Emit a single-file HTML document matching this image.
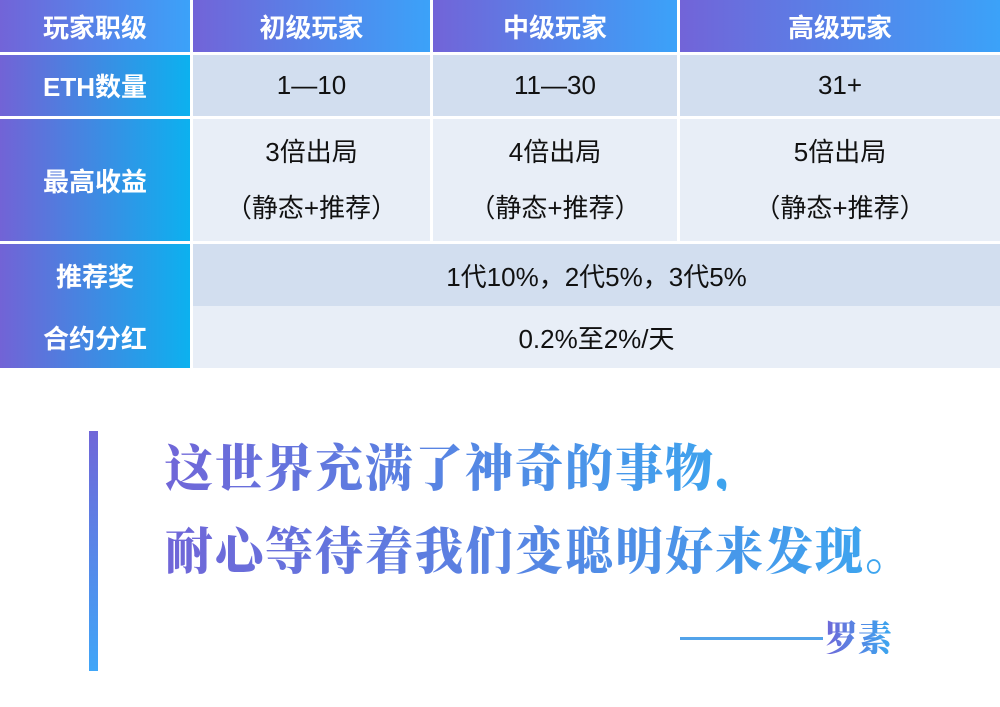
<!DOCTYPE html>
<html><head><meta charset="utf-8"><style>
body{margin:0;width:1000px;height:707px;background:#fff;position:relative;overflow:hidden;font-family:"Liberation Sans","Noto Sans CJK SC",sans-serif}
.c{position:absolute;display:flex;align-items:center;justify-content:center;text-align:center;font-size:26px;color:#111}
.h{background:linear-gradient(90deg,#7264d8,#3ba2f9);color:#fff;font-weight:bold}
.l{background:linear-gradient(90deg,#7263d6,#0cb1ef);color:#fff;font-weight:bold}
.a{background:#d2deef}.b{background:#e8eef7}
.q{position:absolute;left:165px;font-family:"Noto Serif CJK SC",serif;font-weight:900;font-size:48px;letter-spacing:2px;line-height:1;background:linear-gradient(90deg,#7066d8,#3aa8f0);-webkit-background-clip:text;background-clip:text;color:transparent;white-space:nowrap;transform:scaleY(1.06);transform-origin:top left}
</style></head><body>
<div class="c h" style="left:0;top:0;width:190px;height:52px">玩家职级</div>
<div class="c h" style="left:193px;top:0;width:237px;height:52px">初级玩家</div>
<div class="c h" style="left:433px;top:0;width:244px;height:52px">中级玩家</div>
<div class="c h" style="left:680px;top:0;width:320px;height:52px">高级玩家</div>

<div class="c l" style="left:0;top:55px;width:190px;height:61px">ETH数量</div>
<div class="c a" style="left:193px;top:55px;width:237px;height:61px">1—10</div>
<div class="c a" style="left:433px;top:55px;width:244px;height:61px">11—30</div>
<div class="c a" style="left:680px;top:55px;width:320px;height:61px">31+</div>

<div class="c l" style="left:0;top:119px;width:190px;height:122px">最高收益</div>
<div class="c b" style="left:193px;top:119px;width:237px;height:122px;line-height:56px">3倍出局<br>（静态+推荐）</div>
<div class="c b" style="left:433px;top:119px;width:244px;height:122px;line-height:56px">4倍出局<br>（静态+推荐）</div>
<div class="c b" style="left:680px;top:119px;width:320px;height:122px;line-height:56px">5倍出局<br>（静态+推荐）</div>

<div class="c l" style="left:0;top:244px;width:190px;height:124px;flex-direction:column;justify-content:space-around">
<span>推荐奖</span><span>合约分红</span></div>
<div class="c a" style="left:193px;top:244px;width:807px;height:62px">1代10%，2代5%，3代5%</div>
<div class="c b" style="left:193px;top:306px;width:807px;height:62px">0.2%至2%/天</div>

<div style="position:absolute;left:89px;top:431px;width:9px;height:240px;background:linear-gradient(180deg,#7066d8,#40a6f8)"></div>
<div class="q" style="top:440px">这世界充满了神奇的事物，</div>
<div class="q" style="top:523px">耐心等待着我们变聪明好来发现。</div>
<div style="position:absolute;left:680px;top:637px;width:143px;height:3px;background:#52a3ea"></div>
<div class="q" style="left:824px;top:618px;font-size:34px;letter-spacing:0">罗素</div>
</body></html>
